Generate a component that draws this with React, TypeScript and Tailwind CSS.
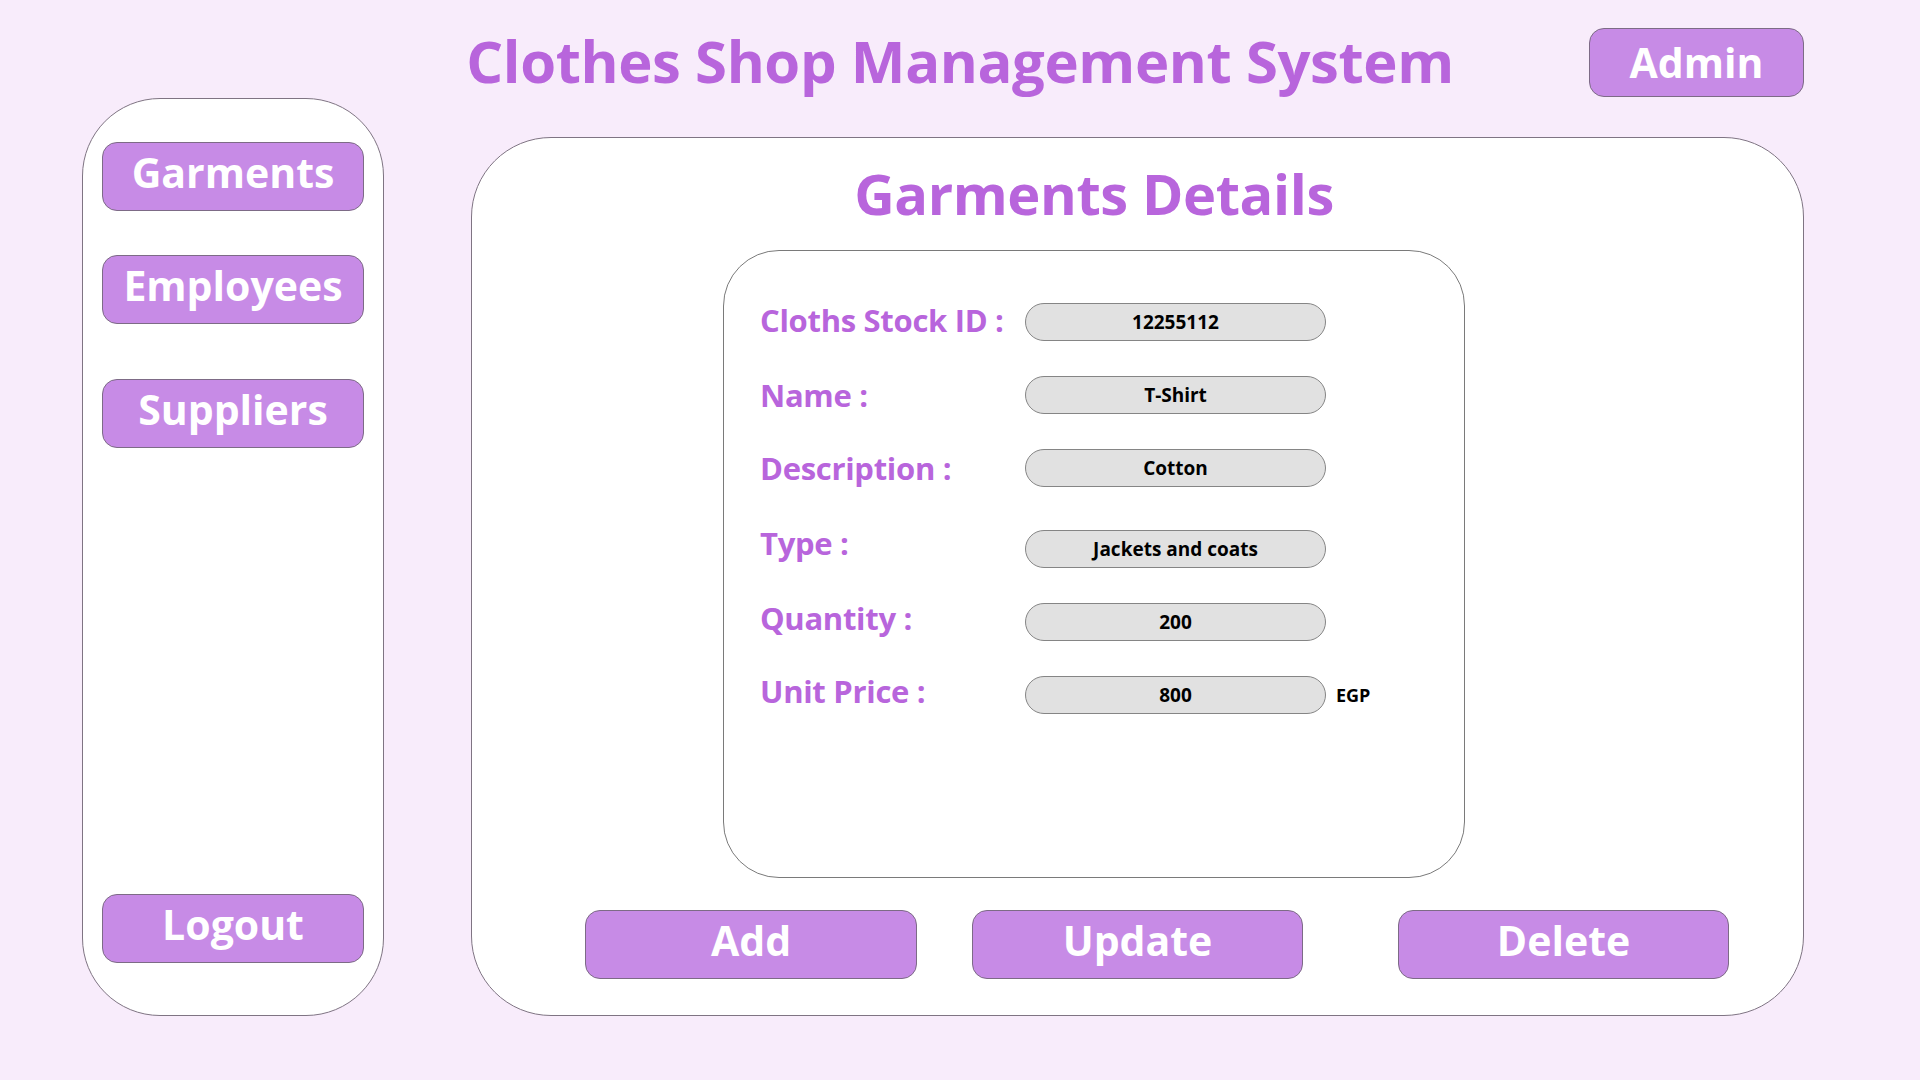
const fields = [
  { label: "Cloths Stock ID :", value: "12255112", row: "mt-[52px]", nudge: "-translate-y-0.5" },
  { label: "Name :", value: "T-Shirt", row: "mt-[35px]", nudge: "" },
  { label: "Description :", value: "Cotton", row: "mt-[35px]", nudge: "" },
  { label: "Type :", value: "Jackets and coats", row: "mt-[43px]", nudge: "-translate-y-1.5" },
  { label: "Quantity :", value: "200", row: "mt-[35px]", nudge: "-translate-y-1" },
  { label: "Unit Price :", value: "800", row: "mt-[35px]", nudge: "-translate-y-1", suffix: "EGP" },
];

function PurpleButton({ label, className }: { label: string; className?: string }) {
  return (
    <button
      className={`h-[69px] rounded-[15px] border border-[#7d6b86] bg-[#c78be6] text-[41px] font-bold leading-none text-white ${className ?? ""}`}
    >
      {label}
    </button>
  );
}

export default function App() {
  return (
    <div
      className="h-[1080px] w-[1920px] overflow-hidden bg-[#f8ecfb]"
      style={{ fontFamily: '"Open Sans", "Noto Sans", sans-serif' }}
    >
      <header className="grid h-[98px] grid-cols-[1fr_auto_1fr]">
        <div />
        <h1 className="pt-[32px] text-[58px] font-bold leading-none tracking-[-0.4px] text-[#b865dc]">
          Clothes Shop Management System
        </h1>
        <div className="flex justify-end pr-[116px] pt-[28px]">
          <PurpleButton label="Admin" className="w-[215px]" />
        </div>
      </header>

      <div className="flex items-start pl-[82px]">
        <aside className="flex h-[918px] w-[302px] flex-col rounded-[78px] border border-[#7f7483] bg-white px-[19px] pt-[43px] pb-[52px]">
          <PurpleButton label="Garments" className="w-full pb-2" />
          <PurpleButton label="Employees" className="mt-[44px] w-full pb-2" />
          <PurpleButton label="Suppliers" className="mt-[55px] w-full pb-2" />
          <PurpleButton label="Logout" className="mt-auto w-full pb-2" />
        </aside>

        <main className="ml-[87px] mt-[39px] flex h-[879px] w-[1333px] flex-col rounded-[80px] border border-[#7f7483] bg-white">
          <div className="ml-[251px] w-[742px]">
            <h2 className="flex h-[112px] items-center justify-center pb-0.5 text-[56px] font-bold leading-none tracking-[-0.4px] text-[#b865dc]">
              Garments Details
            </h2>
            <section className="h-[628px] rounded-[56px] border border-[#7a7a7a] bg-white pl-[36px]">
              {fields.map((f) => (
                <div key={f.label} className={`flex h-[38px] items-center ${f.row}`}>
                  <span
                    className={`w-[265px] text-[31px] font-bold leading-none tracking-[-0.3px] text-[#b865dc] ${f.nudge}`}
                  >
                    {f.label}
                  </span>
                  <div className="flex h-[38px] w-[301px] items-center justify-center rounded-full border border-[#858585] bg-[#e1e1e1] text-[19px] font-bold text-black">
                    {f.value}
                  </div>
                  {f.suffix ? (
                    <span className="ml-[10px] text-[18px] font-bold text-black">{f.suffix}</span>
                  ) : null}
                </div>
              ))}
            </section>
          </div>
          <div className="mt-[32px] flex pl-[113px]">
            <PurpleButton label="Add" className="w-[332px] pb-2" />
            <PurpleButton label="Update" className="ml-[55px] w-[331px] pb-2" />
            <PurpleButton label="Delete" className="ml-[95px] w-[331px] pb-2" />
          </div>
        </main>
      </div>
    </div>
  );
}
